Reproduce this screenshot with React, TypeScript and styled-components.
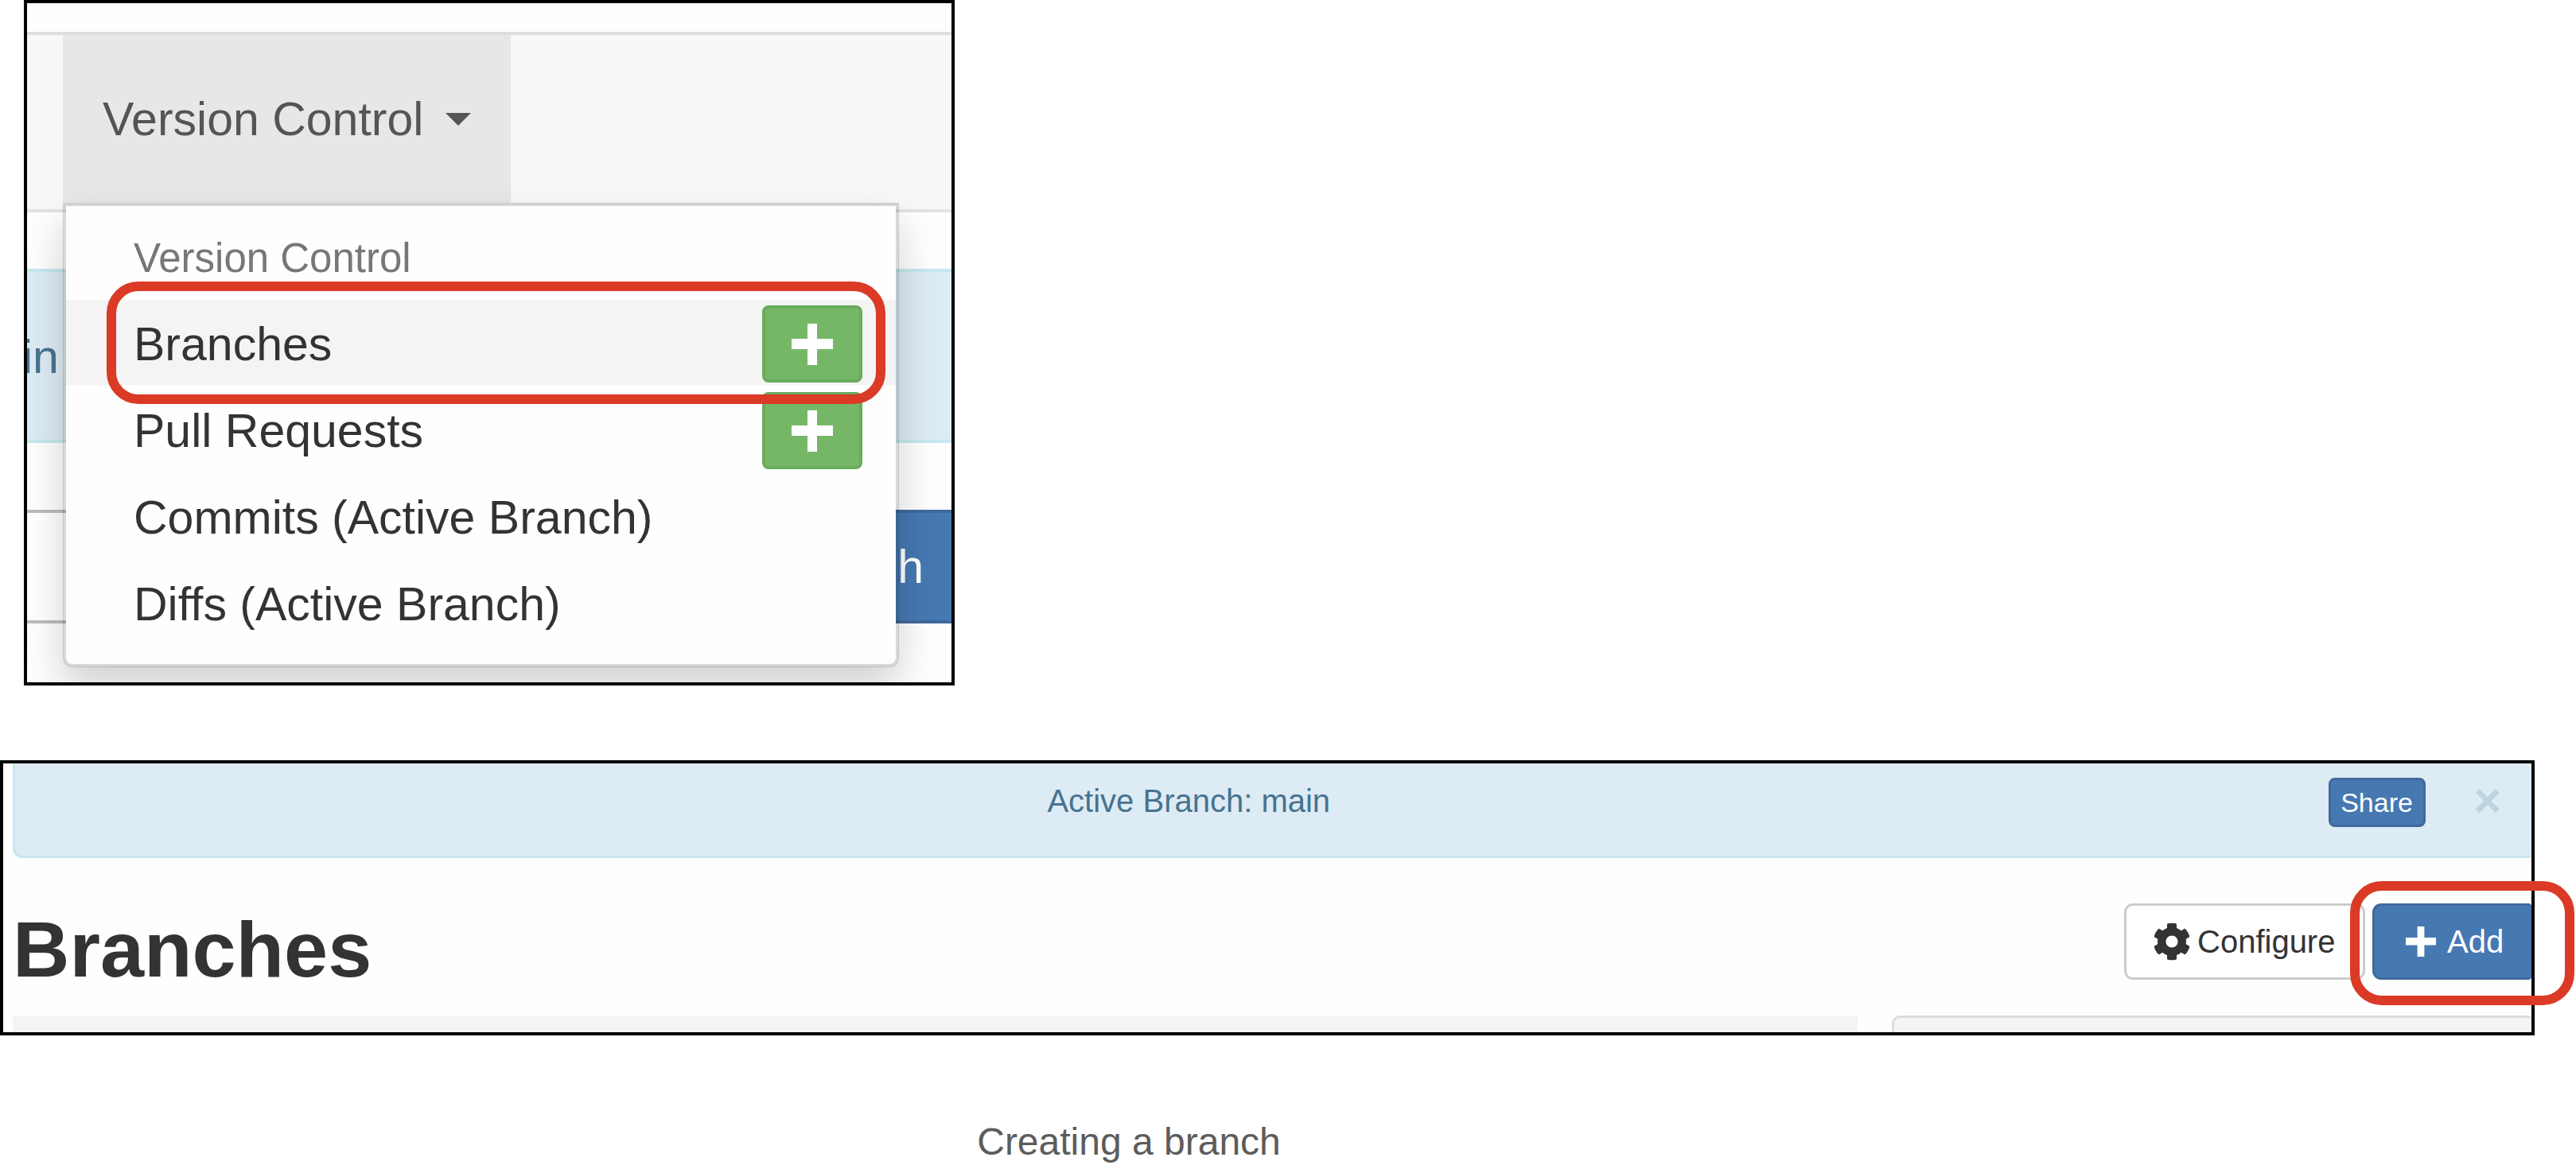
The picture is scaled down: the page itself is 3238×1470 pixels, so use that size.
import React from "react";
import styled, { createGlobalStyle, css } from "styled-components";
import { FaCog } from "react-icons/fa";

const colors = {
  text: "#333333",
  info: "#ddebf4",
  infoBorder: "#c6e7ee",
  infoText: "#46738f",
  primary: "#4678b2",
  primaryBorder: "#40699d",
  success: "#76b767",
  successBorder: "#69ac5d",
  callout: "#da3a26",
};

const GlobalStyle = createGlobalStyle`
  *, *::before, *::after { box-sizing: border-box; }
  body {
    margin: 0;
    background: #ffffff;
    color: ${colors.text};
    font-family: "Liberation Sans", Arial, Helvetica, sans-serif;
  }
  button, input { font: inherit; margin: 0; }
  a { color: inherit; text-decoration: none; }
`;

const Page = styled.main`
  display: flex;
  flex-direction: column;
`;

const frame = css`
  border: 4px solid #000000;
  background: #fefefe;
`;

/* ---------- Menu frame ---------- */

const MenuFrame = styled.section`
  ${frame}
  position: relative;
  width: 1170px;
  max-width: 100%;
  margin-left: 30px;
  padding: 36px 0 74px;
  overflow: hidden;
`;

const NavBar = styled.nav`
  display: flex;
  align-items: flex-start;
  padding: 0 45px 8px;
  border-top: 4px solid #dddddd;
  border-bottom: 4px solid #e2e2e2;
  background: #f8f8f8;
`;

const NavToggle = styled.button`
  display: flex;
  align-items: center;
  gap: 28px;
  height: 211px;
  padding: 0 50px;
  border: 0;
  background: #e7e7e7;
  color: #555555;
  font-size: 59px;
`;

const Caret = styled.span`
  border-top: 16px solid currentColor;
  border-left: 16px solid transparent;
  border-right: 16px solid transparent;
`;

const InfoStrip = styled.div`
  display: flex;
  align-items: center;
  height: 219px;
  margin: 71px 0 84px;
  padding: 2px 0 0;
  border: solid ${colors.infoBorder};
  border-width: 4px 0;
  background: ${colors.info};
  color: ${colors.infoText};
  font-size: 59px;
  text-indent: -6px;
`;

const SearchRow = styled.form`
  display: flex;
  height: 143px;
`;

const SearchInput = styled.input`
  flex: 1;
  min-width: 0;
  border: solid #bbbbbb;
  border-width: 4px 0;
  background: #ffffff;
`;

const SearchButton = styled.button`
  width: 300px;
  padding: 0 35px 0 0;
  border: solid ${colors.primaryBorder};
  border-width: 4px 0;
  background: ${colors.primary};
  color: #ffffff;
  font-size: 59px;
  text-align: right;
`;

const Menu = styled.div`
  position: absolute;
  top: 251px;
  left: 45px;
  width: 1051px;
  padding: 20px 0 24px;
  border: 4px solid rgba(0, 0, 0, 0.15);
  border-radius: 0 0 12px 12px;
  background: #fefefe;
  background-clip: padding-box;
  box-shadow: 0 25px 50px rgba(0, 0, 0, 0.18);
`;

const MenuHeader = styled.div`
  padding: 0 85px;
  margin-bottom: 6px;
  color: #777777;
  font-size: 51px;
  line-height: 92px;
`;

const MenuList = styled.ul`
  display: flex;
  flex-direction: column;
  gap: 2px;
  margin: 0;
  padding: 0;
  list-style: none;
`;

const MenuRow = styled.li<{ $active?: boolean }>`
  position: relative;
  display: flex;
  align-items: center;
  justify-content: space-between;
  height: 107px;
  padding: 4px 42px 0 85px;
  background: ${(p) => (p.$active ? "#f4f4f4" : "transparent")};
  font-size: 59px;
`;

const GreenButton = styled.button`
  display: flex;
  align-items: center;
  justify-content: center;
  width: 126px;
  height: 97px;
  padding: 0;
  border: 4px solid ${colors.successBorder};
  border-radius: 8px;
  background: ${colors.success};
  color: #ffffff;
`;

/* Red outline drawn over whatever it wraps. */
const Callout = styled.span<{ $inset: string }>`
  position: absolute;
  inset: ${(p) => p.$inset};
  z-index: 1;
  border: 12px solid ${colors.callout};
  border-radius: 40px;
  pointer-events: none;
`;

/* ---------- Branches frame ---------- */

const BranchesFrame = styled.section`
  ${frame}
  margin: 94px 52px 0 0;
  padding-left: 12px;
`;

const Alert = styled.div`
  display: flex;
  align-items: flex-start;
  height: 119px;
  padding: 18px 38px 0 43px;
  border: solid ${colors.infoBorder};
  border-width: 0 0 3px 3px;
  border-radius: 0 0 4px 12px;
  background: ${colors.info};
`;

const AlertText = styled.span`
  flex: 1;
  color: ${colors.infoText};
  font-size: 40px;
  line-height: 58px;
  text-align: center;
`;

const ShareButton = styled.button`
  width: 122px;
  height: 62px;
  padding: 0;
  border: 3px solid ${colors.primaryBorder};
  border-radius: 8px;
  background: ${colors.primary};
  color: #ffffff;
  font-size: 34px;
`;

const CloseButton = styled.button`
  margin-left: 61px;
  padding: 0;
  border: 0;
  background: none;
  color: #bdd3e0;
  font-size: 59px;
  font-weight: 700;
  line-height: 58px;
`;

const TitleRow = styled.header`
  display: flex;
  align-items: flex-start;
  gap: 9px;
  margin: 57px 0 25px;
`;

const Title = styled.h1`
  flex: 1;
  margin: 0;
  font-size: 99px;
  line-height: 116px;
`;

const ActionButton = styled.button<{ $primary?: boolean }>`
  display: flex;
  align-items: center;
  gap: ${(p) => (p.$primary ? 14 : 8)}px;
  width: ${(p) => (p.$primary ? 200 : 303)}px;
  height: 96px;
  padding: 0 0 0 ${(p) => (p.$primary ? 39 : 33)}px;
  border: 3px solid ${(p) => (p.$primary ? colors.primaryBorder : "#cccccc")};
  border-right-width: ${(p) => (p.$primary ? 0 : 3)}px;
  border-radius: ${(p) => (p.$primary ? "11px 4px 4px 11px" : "11px")};
  background: ${(p) => (p.$primary ? colors.primary : "#ffffff")};
  color: ${(p) => (p.$primary ? "#ffffff" : colors.text)};
  font-size: 40px;
`;

const AddWrap = styled.div`
  position: relative;
`;

const Panels = styled.div`
  display: grid;
  grid-template-columns: 2319fr 804fr;
  gap: 43px;
`;

const Panel = styled.div<{ $outlined?: boolean }>`
  height: 21px;
  background: #f4f4f4;
  ${(p) =>
    p.$outlined &&
    css`
      border: solid #dddddd;
      border-width: 3px 0 0 3px;
      border-radius: 10px 4px 0 0;
    `}
`;

const Caption = styled.p`
  margin: 103px 400px 0 0;
  color: #5c5c5c;
  font-size: 48px;
  line-height: 62px;
  text-align: center;
`;

function PlusIcon({ size }: { size: number }) {
  return (
    <svg width={size} height={size} viewBox="0 0 52 52" aria-hidden="true">
      <path
        fill="currentColor"
        d="M20 0h12v19h20v13H32v20H20V32H0V19h20z"
      />
    </svg>
  );
}

const items = [
  { label: "Branches", add: true, active: true },
  { label: "Pull Requests", add: true },
  { label: "Commits (Active Branch)" },
  { label: "Diffs (Active Branch)" },
];

export default function App() {
  return (
    <>
      <GlobalStyle />
      <Page>
        <MenuFrame>
          <NavBar>
            <NavToggle type="button" aria-expanded="true">
              Version Control
              <Caret />
            </NavToggle>
          </NavBar>
          <InfoStrip>in</InfoStrip>
          <SearchRow>
            <SearchInput type="text" aria-label="Search" />
            <SearchButton type="button" aria-label="Search">
              h
            </SearchButton>
          </SearchRow>
          <Menu>
            <MenuHeader>Version Control</MenuHeader>
            <MenuList>
              {items.map((item) => (
                <MenuRow key={item.label} $active={item.active}>
                  <a href="#">{item.label}</a>
                  {item.add && (
                    <GreenButton type="button" aria-label={`Add ${item.label}`}>
                      <PlusIcon size={52} />
                    </GreenButton>
                  )}
                  {item.active && <Callout $inset="-23px 13px -24px 51px" />}
                </MenuRow>
              ))}
            </MenuList>
          </Menu>
        </MenuFrame>

        <BranchesFrame>
          <Alert>
            <AlertText>Active Branch: main</AlertText>
            <ShareButton type="button">Share</ShareButton>
            <CloseButton type="button" aria-label="Close">
              ×
            </CloseButton>
          </Alert>
          <TitleRow>
            <Title>Branches</Title>
            <ActionButton type="button">
              <FaCog size={48} />
              Configure
            </ActionButton>
            <AddWrap>
              <ActionButton type="button" $primary>
                <PlusIcon size={38} />
                Add
              </ActionButton>
              <Callout $inset="-28px -54px -32px -28px" />
            </AddWrap>
          </TitleRow>
          <Panels>
            <Panel />
            <Panel $outlined />
          </Panels>
        </BranchesFrame>
        <Caption>Creating a branch</Caption>
      </Page>
    </>
  );
}
